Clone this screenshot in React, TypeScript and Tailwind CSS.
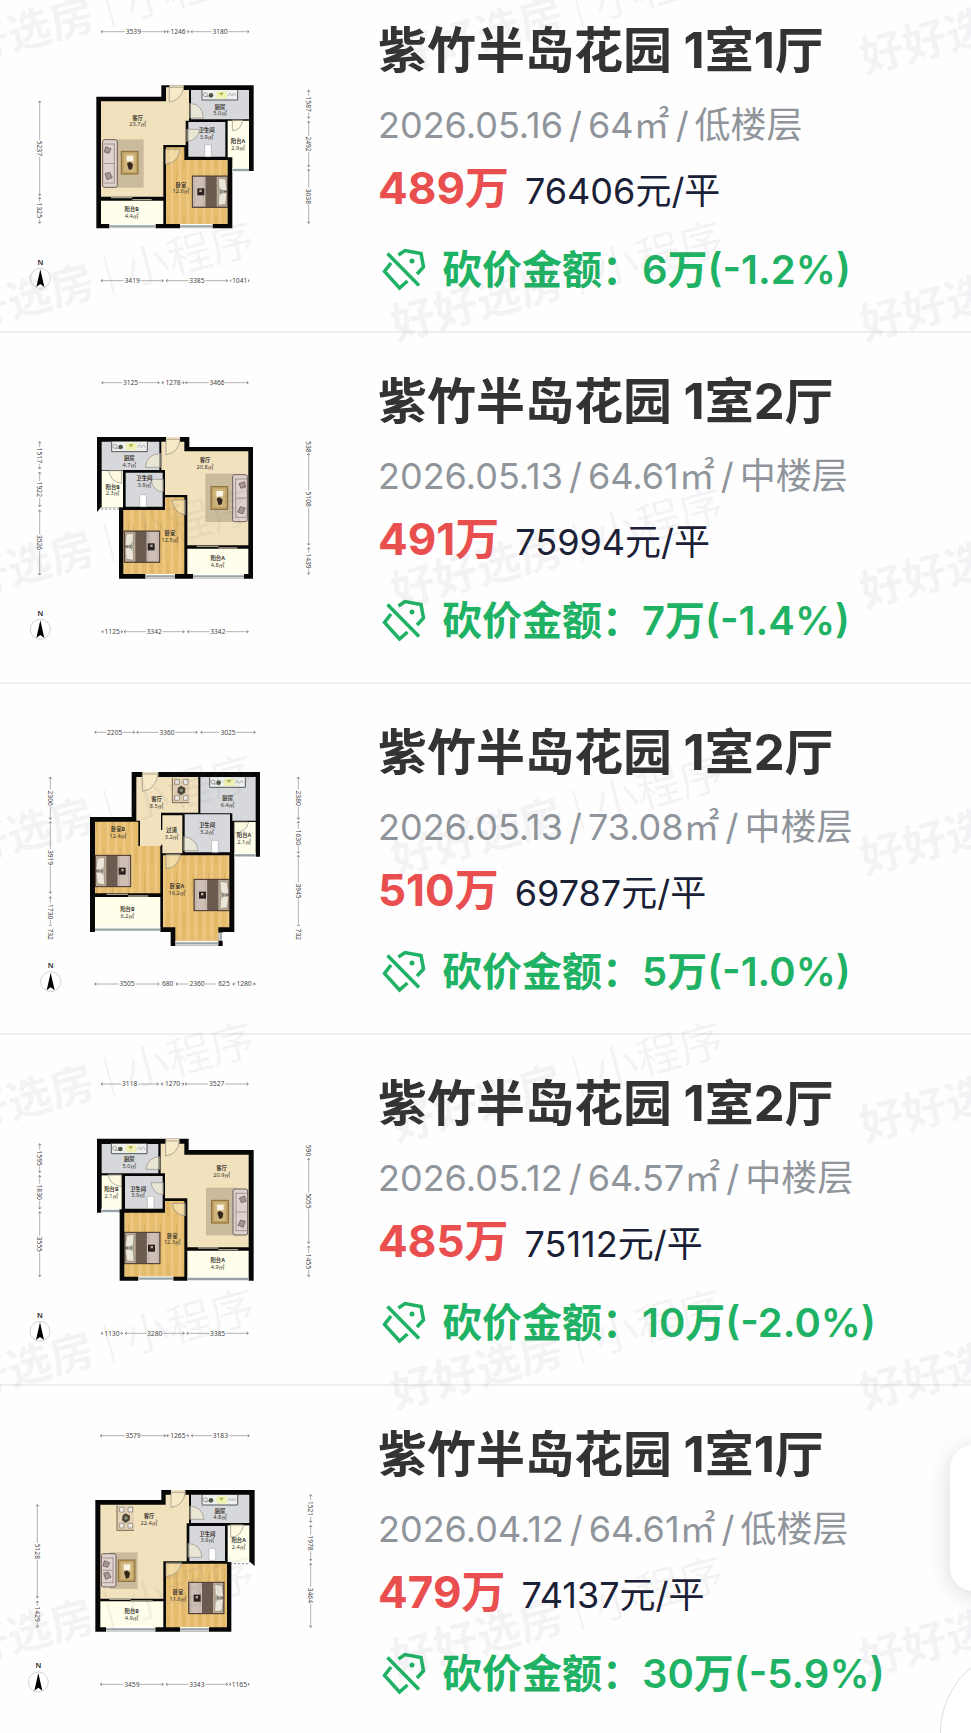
import React from 'react';

interface Label {
  x: number;
  y: number;
  name: string;
  area: string;
}

// [start, end, text]
type Dim = [number, number, string];

interface Plan {
  top: number;
  shell: string;
  rooms: { d: string; fill: string }[];
  windows: string[];
  doors: string[];
  furniture: React.ReactNode;
  labels: Label[];
  dims: { top: Dim[]; left: Dim[]; right: Dim[]; bottom: Dim[] };
  // y of the upper row, x of the left column, x of the right column, y of the lower row
  axes: [number, number, number, number];
  compass: [number, number];
}

interface Listing {
  title: string;
  date: string;
  area: string;
  floor: string;
  price: string;
  unitPrice: string;
  cut: string;
  plan: Plan;
}

const CREAM = '#f1e2bd';
const GRAY = '#d6d8db';
const IVORY = '#fffeea';
const WOOD = 'url(#wood)';

const Bed: React.FC<{ x: number; y: number; flip?: boolean }> = ({ x, y, flip }) => (
  <g transform={flip ? `translate(${x + 106} ${y}) scale(-1 1)` : `translate(${x} ${y})`}>
    <rect width="106" height="94" fill="#6f6055" />
    <rect x="2" y="2" width="38" height="90" fill="#cdbfb5" />
    <path d="M6 2v90M34 2v90" stroke="#b7a69c" strokeWidth="2" />
    <rect x="40" y="0" width="33" height="94" fill="#6a5a4f" />
    <rect x="73" y="2" width="31" height="90" fill="#b9ab98" />
    <path d="M78 6l22 3 4 34-24 1zM78 88l22-3 4-34-24-1z" fill="#ece6da" stroke="#8d8070" strokeWidth="2" />
    <path d="M80 34l12 12-10 14 4-14z" fill="#7e8c80" />
    <path d="M96 47h10" stroke="#3f4f57" strokeWidth="3" />
    <rect x="15" y="37" width="21" height="21" fill="#2a2220" />
    <rect x="21" y="41" width="7" height="7" fill="#bfae9f" />
    <rect x="0" y="0" width="106" height="94" fill="none" stroke="#4c3a34" strokeWidth="3" />
  </g>
);

const Sofa: React.FC<{ x: number; y: number; h: number; flip?: boolean }> = ({ x, y, h, flip }) => (
  <g transform={flip ? `translate(${x + 46} ${y}) scale(-1 1)` : `translate(${x} ${y})`}>
    <rect x="1" y="1" width="44" height={h - 2} rx="6" fill="#ddd3cc" stroke="#6f5a58" strokeWidth="3" />
    <path d={`M36 12v${h - 24}M4 14h32M4 ${h / 2}h32M4 ${h - 14}h32`} stroke="#8d7478" strokeWidth="2" fill="none" />
    <path d={`M10 22l16 6-6 14-14-4zM8 ${h - 42}l14-4 8 16-16 6z`} fill="#a79597" stroke="#5f4a4f" strokeWidth="2" />
  </g>
);

const CoffeeTable: React.FC<{ x: number; y: number; w?: number; h?: number }> = ({ x, y, w = 52, h = 70 }) => (
  <g transform={`translate(${x} ${y})`}>
    <rect x="1" y="1" width={w - 2} height={h - 2} fill="#bfa063" stroke="#8a6c36" strokeWidth="3" />
    <rect x="8" y="7" width={w - 16} height={h - 14} fill="#d0b67c" />
    <rect x="17" y="14" width="20" height="17" fill="#fbf3e4" />
    <path d="M18 38l8-6 10 8-3 14-9 3z" fill="#33241c" />
  </g>
);

const Dining: React.FC<{ x: number; y: number }> = ({ x, y }) => (
  <g transform={`translate(${x} ${y})`}>
    <rect x="0" y="0" width="52" height="76" fill="#e4d2b4" />
    <path d="M1 0v75h51" stroke="#7d6450" strokeWidth="3" fill="none" />
    <path d="M8 6h14v14H8zM34 6h14v14H34zM8 54h14v14H8zM34 54h14v14H34z" fill="#f0ebe4" stroke="#80746a" strokeWidth="2" />
    <path d="M27 24l13 7-1 14-12 8-11-8 2-15z" fill="#4a4238" />
    <circle cx="28" cy="38" r="5" fill="#8c9a7a" />
  </g>
);

const Counter: React.FC<{ x: number; y: number }> = ({ x, y }) => (
  <g transform={`translate(${x} ${y})`}>
    <rect width="108" height="30" fill="#eff0ee" />
    <path d="M1 0v28M0 30h108V0" stroke="#55585c" strokeWidth="3" fill="none" />
    <rect x="44" y="4" width="32" height="22" fill="#eef0b4" />
    <path d="M52 8h14l-7 9z" fill="#a7b13a" />
    <circle cx="11" cy="14" r="6" fill="none" stroke="#74787c" strokeWidth="2" />
    <circle cx="28" cy="16" r="7" fill="#4d5a45" />
    <path d="M12 20h12" stroke="#74787c" strokeWidth="2" />
    <path d="M80 18c0-10 9-10 9 0M92 18c0-10 9-10 9 0" stroke="#8b8f92" strokeWidth="2" fill="none" />
  </g>
);

const Toilet: React.FC<{ x: number; y: number }> = ({ x, y }) => (
  <rect x={x} y={y} width="20" height="36" rx="2" fill="#ffffff" stroke="#a9adb1" strokeWidth="2" />
);

const Rug: React.FC<{ x: number; y: number; w: number; h: number }> = ({ x, y, w, h }) => (
  <rect x={x} y={y} width={w} height={h} fill="#cbbb9d" />
);

const HorizontalDim: React.FC<{ dim: Dim; y: number }> = ({ dim: [a, b, text], y }) => (
  <g>
    <path d={`M${a} ${y}H${b}`} stroke="#8d8d8d" strokeWidth="2" />
    <path d={`M${a + 5} ${y - 4}L${a} ${y}l5 4M${b - 5} ${y - 4}L${b} ${y}l-5 4`} stroke="#555555" strokeWidth="2" fill="none" />
    <rect x={(a + b) / 2 - 25} y={y - 10} width="50" height="20" fill="#ffffff" />
    <text x={(a + b) / 2} y={y + 7} textAnchor="middle" fontSize="20" fill="#444444">
      {text}
    </text>
  </g>
);

const VerticalDim: React.FC<{ dim: Dim; x: number }> = ({ dim: [a, b, text], x }) => (
  <g transform={`translate(${x} 0) rotate(90)`}>
    <HorizontalDim dim={[a, b, text]} y={0} />
  </g>
);

const FloorPlan: React.FC<{ plan: Plan; name: string }> = ({ plan, name }) => {
  const [topY, leftX, rightX, bottomY] = plan.axes;
  const [cx, cy] = plan.compass;

  return (
    <svg
      viewBox={`0 ${-plan.top} 1020 1050`}
      role="img"
      aria-label={name}
      className="w-[340px] h-[350px] shrink-0"
      fontFamily="'Noto Sans', 'Noto Sans CJK SC', sans-serif"
    >
      <defs>
        <pattern id="wood" width="48" height="200" patternUnits="userSpaceOnUse">
          <rect width="48" height="200" fill="#e6bd6f" />
          <path d="M12 0v200M36 0v200" stroke="#ecc881" strokeWidth="8" />
          <path d="M24 40v60M2 120v70" stroke="#dcae5c" strokeWidth="3" />
        </pattern>
      </defs>
      <path d={plan.shell} fill="#070707" />
      {plan.rooms.map((room) => (
        <path key={room.d} d={room.d} fill={room.fill} />
      ))}
      {plan.windows.map((d) => (
        <g key={d} fill="none">
          <path d={d} stroke="#ffffff" strokeWidth="14" />
          <path d={d} stroke="#9aa3a3" strokeWidth="7" />
        </g>
      ))}
      {plan.doors.map((d) => (
        <path key={d} d={d} fill="#fbf3d2" fillOpacity="0.5" stroke="#8e8a80" strokeWidth="2" />
      ))}
      {plan.furniture}
      {plan.labels.map((label) => (
        <g key={label.name} textAnchor="middle" fill="#3b362f">
          <text x={label.x} y={label.y + 6} fontSize="16" fontWeight="700">
            {label.name}
          </text>
          <text x={label.x} y={label.y + 26} fontSize="17">
            {label.area}
          </text>
        </g>
      ))}
      {plan.dims.top.map((dim) => (
        <HorizontalDim key={dim[0]} dim={dim} y={topY} />
      ))}
      {plan.dims.bottom.map((dim) => (
        <HorizontalDim key={dim[0]} dim={dim} y={bottomY} />
      ))}
      {plan.dims.left.map((dim) => (
        <VerticalDim key={dim[0]} dim={dim} x={leftX} />
      ))}
      {plan.dims.right.map((dim) => (
        <VerticalDim key={dim[0]} dim={dim} x={rightX} />
      ))}
      <text x={cx} y={cy - 41} textAnchor="middle" fontSize="22" fontWeight="600" fill="#222222">
        N
      </text>
      <circle cx={cx} cy={cy} r="30" fill="#ffffff" stroke="#bdbdbd" strokeWidth="2" />
      <path d={`M${cx} ${cy - 27}l12 53-12-9-12 9z`} fill="#000000" />
    </svg>
  );
};

const TagOffIcon: React.FC = () => (
  <svg viewBox="0 0 44 44" className="ml-1 size-11 shrink-0" fill="none" stroke="#1fb264" strokeWidth="3.5" aria-hidden="true">
    <path d="M16.500 7L23 2.500L39 5.500L41.500 19L35 26" />
    <path d="M9 15L2.500 23.500L17.500 40L25.500 33" />
    <path d="M5.500 5.500L37 37.500" />
    <circle cx="30" cy="13" r="2.500" fill="#1fb264" stroke="none" />
  </svg>
);

const listings: Listing[] = [
  {
    title: '紫竹半岛花园 1室1厅',
    date: '2026.05.16',
    area: '64㎡',
    floor: '低楼层',
    price: '489万',
    unitPrice: '76406元/平',
    cut: '6万(-1.2%)',
    plan: {
      top: 54,
      shell: 'M289 290H484V256H761V513H697V685H289Z',
      rooms: [
        { d: 'M303 304H498V262H508V256H551V270H567V362H557V435H490V590H303Z', fill: CREAM },
        { d: 'M573 270H747V358H573Z', fill: GRAY },
        { d: 'M565 366H676V470H565Z', fill: GRAY },
        { d: 'M683 362H747V507H697V472H683Z', fill: IVORY },
        { d: 'M498 442H553V480H683V672H498Z', fill: WOOD },
        { d: 'M303 602H490V672H303Z', fill: IVORY },
      ],
      windows: ['M328 679H467', 'M540 679H638', 'M697 510H747'],
      doors: ['M508 262H551Q545 300 508 306Z', 'M569 310Q608 312 610 354H569Z', 'M560 388H600Q590 425 560 424Z', 'M697 360H728Q724 392 697 392Z', 'M496 448H540Q534 490 496 492Z'],
      furniture: (
        <>
          <path d="M333 593H397M397 599H455" stroke="#a8a18e" strokeWidth="4" />
          <Rug x={330} y={418} w={101} h={145} />
          <Sofa x={307} y={418} h={145} />
          <CoffeeTable x={363} y={453} />
          <Counter x={605} y={270} />
          <Toilet x={614} y={434} />
          <Bed x={577} y={528} />
        </>
      ),
      labels: [
        { x: 413, y: 353, name: '客厅', area: '23.7㎡' },
        { x: 660, y: 320, name: '厨房', area: '5.0㎡' },
        { x: 620, y: 391, name: '卫生间', area: '3.9㎡' },
        { x: 714, y: 424, name: '阳台A', area: '2.9㎡' },
        { x: 543, y: 554, name: '卧室', area: '12.6㎡' },
        { x: 395, y: 627, name: '阳台B', area: '4.4㎡' },
      ],
      dims: {
        top: [[303, 497, '3539'], [500, 568, '1246'], [573, 747, '3180']],
        left: [[303, 587, '5237'], [592, 670, '1325']],
        right: [[270, 355, '1587'], [364, 500, '2492'], [508, 670, '3038']],
        bottom: [[303, 490, '3419'], [498, 683, '3385'], [690, 748, '1041']],
      },
      axes: [95, 119, 926, 842],
      compass: [121, 835],
    },
  },
  {
    title: '紫竹半岛花园 1室2厅',
    date: '2026.05.13',
    area: '64.61㎡',
    floor: '中楼层',
    price: '491万',
    unitPrice: '75994元/平',
    cut: '7万(-1.4%)',
    plan: {
      top: 51,
      shell: 'M291 261H568V291H759V686H357V472H303L291 486Z',
      rooms: [
        { d: 'M305 275H478V360H305Z', fill: GRAY },
        { d: 'M305 362H369V472H305Z', fill: IVORY },
        { d: 'M377 368H488V470H377Z', fill: GRAY },
        { d: 'M484 275H498V261H540V275H553V304H745V586H562V435H495V360H484Z', fill: CREAM },
        { d: 'M370 480H495V442H553V672H370Z', fill: WOOD },
        { d: 'M562 596H745V672H562Z', fill: IVORY },
      ],
      windows: ['M436 679H525', 'M579 679H732'],
      doors: ['M498 268H540Q536 308 498 314Z', 'M482 310Q440 312 436 352H482Z', 'M326 362H365V400Q332 396 326 362Z', 'M490 388H453Q458 424 490 426Z', 'M556 450H516Q522 490 556 494Z'],
      furniture: (
        <>
          <path d="M590 589H655M655 594H712" stroke="#a8a18e" strokeWidth="4" />
          <path d="M303 477H365" stroke="#555555" strokeWidth="2" strokeDasharray="7 5" />
          <Rug x={616} y={371} w={90} h={145} />
          <Sofa x={697} y={373} h={143} flip />
          <CoffeeTable x={632} y={409} />
          <Counter x={334} y={275} />
          <Toilet x={419} y={434} />
          <Bed x={373} y={543} flip />
        </>
      ),
      labels: [
        { x: 615, y: 331, name: '客厅', area: '20.8㎡' },
        { x: 388, y: 325, name: '厨房', area: '4.7㎡' },
        { x: 433, y: 385, name: '卫生间', area: '3.9㎡' },
        { x: 338, y: 410, name: '阳台B', area: '2.3㎡' },
        { x: 510, y: 549, name: '卧室', area: '12.5㎡' },
        { x: 653, y: 625, name: '阳台A', area: '4.8㎡' },
      ],
      dims: {
        top: [[305, 478, '3125'], [485, 553, '1278'], [557, 745, '3466']],
        left: [[275, 357, '1517'], [366, 470, '1922'], [480, 675, '3526']],
        right: [[275, 306, '538'], [310, 585, '5108'], [593, 673, '1439']],
        bottom: [[305, 368, '1125'], [372, 553, '3342'], [562, 745, '3342']],
      },
      axes: [98, 119, 926, 845],
      compass: [121, 838],
    },
  },
  {
    title: '紫竹半岛花园 1室2厅',
    date: '2026.05.13',
    area: '73.08㎡',
    floor: '中楼层',
    price: '510万',
    unitPrice: '69787元/平',
    cut: '5万(-1.0%)',
    plan: {
      top: 48,
      shell: 'M395 216H780V470H703V696H668V738H512V696H270V351H395Z',
      rooms: [
        { d: 'M409 231H427V216H475V231H595V338H483V438H420V362H409Z', fill: CREAM },
        { d: 'M487 346H547V460H487V434H481V390H487Z', fill: CREAM },
        { d: 'M601 231H767V362H697V340H601Z', fill: GRAY },
        { d: 'M554 343H690V457H554Z', fill: GRAY },
        { d: 'M703 366H767V463H703Z', fill: IVORY },
        { d: 'M285 365H415V438H481V580H285Z', fill: WOOD },
        { d: 'M489 466H688V682H655V725H526V682H489Z', fill: WOOD },
        { d: 'M285 591H481V684H285Z', fill: IVORY },
      ],
      windows: ['M285 689H481', 'M526 730H655', 'M703 466H767', 'M662 698V722'],
      doors: ['M427 222H474Q468 268 427 274Z', 'M551 410Q590 414 594 452H551Z', 'M703 366H746Q740 396 703 400Z', 'M498 463H541Q536 502 498 506Z'],
      furniture: (
        <>
          <path d="M320 583H384M384 588H445" stroke="#a8a18e" strokeWidth="4" />
          <Dining x={516} y={233} />
          <Counter x={628} y={232} />
          <Toilet x={635} y={421} />
          <Bed x={286} y={466} flip />
          <Bed x={582} y={538} />
        </>
      ),
      labels: [
        { x: 470, y: 297, name: '客厅', area: '8.5㎡' },
        { x: 683, y: 295, name: '厨房', area: '6.4㎡' },
        { x: 515, y: 391, name: '过道', area: '3.2㎡' },
        { x: 621, y: 375, name: '卫生间', area: '5.2㎡' },
        { x: 732, y: 405, name: '阳台A', area: '2.1㎡' },
        { x: 354, y: 387, name: '卧室B', area: '12.4㎡' },
        { x: 531, y: 558, name: '卧室A', area: '16.2㎡' },
        { x: 382, y: 627, name: '阳台B', area: '6.2㎡' },
      ],
      dims: {
        top: [[284, 404, '2205'], [410, 592, '3360'], [602, 766, '3025']],
        left: [[231, 358, '2306'], [365, 580, '3919'], [590, 680, '1730'], [683, 722, '732']],
        right: [[231, 358, '2380'], [364, 460, '1630'], [466, 680, '3945'], [684, 722, '732']],
        bottom: [[284, 478, '3505'], [480, 526, '680'], [528, 654, '2360'], [650, 694, '625'], [698, 766, '1280']],
      },
      axes: [97, 151, 895, 852],
      compass: [152, 845],
    },
  },
  {
    title: '紫竹半岛花园 1室2厅',
    date: '2026.05.12',
    area: '64.57㎡',
    floor: '中楼层',
    price: '485万',
    unitPrice: '75112元/平',
    cut: '10万(-2.0%)',
    plan: {
      top: 45,
      shell: 'M291 266H566V300H761V692H359V488H291Z',
      rooms: [
        { d: 'M305 282H475V370H305Z', fill: GRAY },
        { d: 'M305 376H365V478H305Z', fill: IVORY },
        { d: 'M375 378H488V476H375Z', fill: GRAY },
        { d: 'M482 281H497V266H538V281H553V314H746V592H562V445H495V370H482Z', fill: CREAM },
        { d: 'M373 488H495V453H553V680H373Z', fill: WOOD },
        { d: 'M562 602H746V682H562Z', fill: IVORY },
      ],
      windows: ['M415 686H520', 'M562 687H746', 'M303 483H358'],
      doors: ['M497 273H538Q534 312 497 318Z', 'M480 320Q442 322 438 358H480Z', 'M324 374H364V410Q330 406 324 374Z', 'M490 398H453Q458 432 490 434Z', 'M556 460H516Q522 494 556 498Z'],
      furniture: (
        <>
          <path d="M594 594H655M655 599H714" stroke="#a8a18e" strokeWidth="4" />
          <Rug x={618} y={413} w={90} h={143} />
          <Sofa x={698} y={416} h={140} flip />
          <CoffeeTable x={634} y={450} />
          <Counter x={333} y={281} />
          <Toilet x={442} y={439} />
          <Bed x={374} y={547} flip />
        </>
      ),
      labels: [
        { x: 665, y: 355, name: '客厅', area: '20.9㎡' },
        { x: 388, y: 328, name: '厨房', area: '5.0㎡' },
        { x: 414, y: 416, name: '卫生间', area: '3.9㎡' },
        { x: 334, y: 417, name: '阳台B', area: '2.1㎡' },
        { x: 517, y: 557, name: '卧室', area: '12.3㎡' },
        { x: 653, y: 631, name: '阳台A', area: '4.9㎡' },
      ],
      dims: {
        top: [[303, 475, '3118'], [483, 552, '1270'], [555, 745, '3527']],
        left: [[281, 368, '1595'], [376, 477, '1830'], [485, 680, '3555']],
        right: [[283, 320, '590'], [325, 580, '5055'], [588, 680, '1455']],
        bottom: [[303, 368, '1130'], [375, 553, '3280'], [560, 745, '3385']],
      },
      axes: [102, 119, 926, 850],
      compass: [120, 844],
    },
  },
  {
    title: '紫竹半岛花园 1室1厅',
    date: '2026.04.12',
    area: '64.61㎡',
    floor: '低楼层',
    price: '479万',
    unitPrice: '74137元/平',
    cut: '30万(-5.9%)',
    plan: {
      top: 42,
      shell: 'M286 300H484V270H764V498L750 486H694V695H286Z',
      rooms: [
        { d: 'M301 314H497V284H513V270H556V284H567V370H560V484H490V596H301Z', fill: CREAM },
        { d: 'M573 284H748V369H573Z', fill: GRAY },
        { d: 'M568 378H675V483H568Z', fill: GRAY },
        { d: 'M683 376H748V486H683Z', fill: IVORY },
        { d: 'M498 491H681V682H498Z', fill: WOOD },
        { d: 'M301 604H490V682H301Z', fill: IVORY },
      ],
      windows: ['M318 688H466', 'M540 688H627'],
      doors: ['M513 277H556Q550 318 513 322Z', 'M569 318Q608 320 612 358H569Z', 'M564 430Q604 434 606 472H564Z', 'M692 374H730Q726 410 692 412Z', 'M498 488H545Q538 524 498 530Z'],
      furniture: (
        <>
          <path d="M328 598H392M392 603H458" stroke="#a8a18e" strokeWidth="4" />
          <path d="M690 491H748" stroke="#555555" strokeWidth="2" strokeDasharray="7 5" />
          <Dining x={350} y={316} />
          <Rug x={330} y={457} w={83} h={110} />
          <Sofa x={303} y={460} h={102} />
          <CoffeeTable x={354} y={479} h={66} />
          <Counter x={605} y={285} />
          <Toilet x={627} y={445} />
          <Bed x={566} y={547} />
        </>
      ),
      labels: [
        { x: 447, y: 349, name: '客厅', area: '22.4㎡' },
        { x: 660, y: 332, name: '厨房', area: '4.8㎡' },
        { x: 622, y: 401, name: '卫生间', area: '3.9㎡' },
        { x: 716, y: 420, name: '阳台A', area: '2.4㎡' },
        { x: 534, y: 577, name: '卧室', area: '11.6㎡' },
        { x: 395, y: 634, name: '阳台B', area: '4.9㎡' },
      ],
      dims: {
        top: [[301, 497, '3579'], [500, 567, '1265'], [574, 748, '3183']],
        left: [[314, 594, '5128'], [603, 682, '1429']],
        right: [[284, 367, '1521'], [376, 482, '1978'], [490, 682, '3464']],
        bottom: [[301, 490, '3459'], [498, 683, '3343'], [688, 748, '1165']],
      },
      axes: [107, 112, 932, 853],
      compass: [115, 846],
    },
  },
];

const ListingRow: React.FC<{ listing: Listing }> = ({ listing }) => (
  <li className="flex h-[351px] border-b-2 border-[#efeff0]">
    <FloorPlan plan={listing.plan} name={`${listing.title} 户型图`} />
    <div className="ml-[38px] flex min-w-0 flex-1 flex-col whitespace-nowrap pt-9">
      <h2 className="text-[49px] leading-[66px] font-bold text-[#333333]">{listing.title}</h2>
      <p className="mt-4 flex gap-1.5 text-4xl leading-[50px] text-[#90959b]">
        <span>{listing.date}</span>
        <span>/</span>
        <span>{listing.area}</span>
        <span>/</span>
        <span>{listing.floor}</span>
      </p>
      <p className="mt-2 flex items-baseline gap-4 leading-[60px]">
        <span className="text-[44px] font-bold text-[#e94f4f]">{listing.price}</span>
        <span className="text-4xl text-[#1a2036]">{listing.unitPrice}</span>
      </p>
      <p className="mt-6 flex items-center text-[40px] leading-[56px] font-semibold text-[#1fb264]">
        <TagOffIcon />
        <span className="ml-4">砍价金额：</span>
        <span>{listing.cut}</span>
      </p>
    </div>
  </li>
);

const Watermarks: React.FC = () => (
  <div
    aria-hidden="true"
    className="pointer-events-none absolute -top-[120px] -left-[147px] grid grid-cols-[469px_469px_469px] auto-rows-[267px] select-none"
  >
    {Array.from({ length: 24 }, (_, i) => (
      <div key={i} className="flex items-center justify-center">
        <div className="flex -rotate-15 items-center gap-4 whitespace-nowrap text-[44px] text-[#5a5a78]/7">
          <span className="font-bold">好好选房</span>
          <span className="h-10 w-0.5 bg-[#5a5a78]/7" />
          <span>小程序</span>
        </div>
      </div>
    ))}
  </div>
);

export default function App() {
  return (
    <main className="relative overflow-hidden bg-[#fefefe] font-['Inter','Noto_Sans_CJK_SC',sans-serif]">
      <ul className="-mt-[18px]">
        {listings.map((listing, i) => (
          <ListingRow key={i} listing={listing} />
        ))}
      </ul>
      <Watermarks />
      <div className="fixed -right-20 bottom-[142px] h-[146px] w-[101px] rounded-3xl bg-white shadow-[0_4px_24px_rgba(0,0,0,0.14)]" />
      <div className="fixed -right-[141px] -bottom-[86px] size-[172px] rounded-full border border-[#dddddd] bg-white" />
    </main>
  );
}
